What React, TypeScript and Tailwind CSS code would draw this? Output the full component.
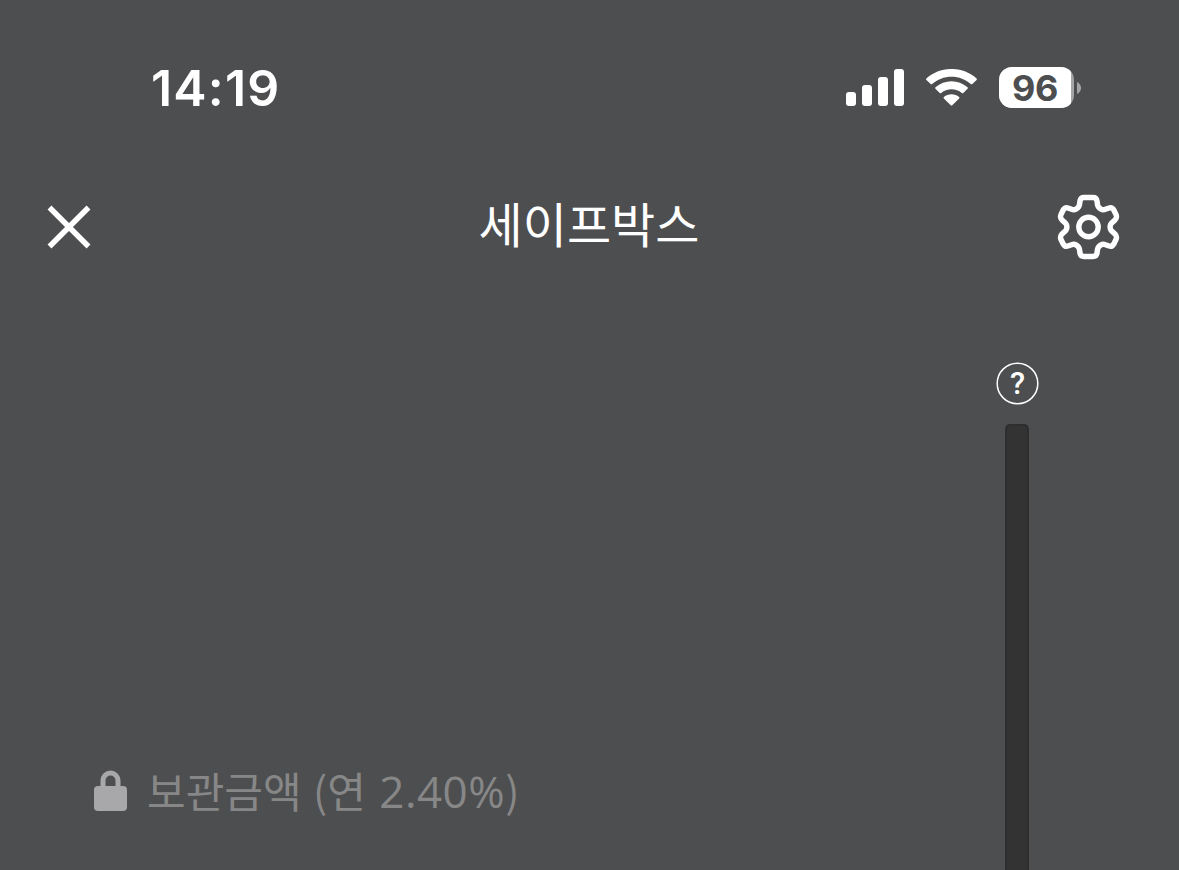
const koFont = "font-['Noto_Sans_CJK_KR','Noto_Sans',sans-serif]";

function SignalIcon() {
  return (
    <svg width="58" height="38" viewBox="0 0 58 38" fill="currentColor">
      <rect x="0" y="23" width="10" height="14" rx="3" />
      <rect x="16" y="16" width="10" height="21" rx="3" />
      <rect x="32" y="8" width="10" height="29" rx="3" />
      <rect x="48" y="0" width="10" height="37" rx="3" />
    </svg>
  );
}

function WifiIcon() {
  return (
    <svg width="51" height="38" viewBox="2 0.5 48 38" preserveAspectRatio="none" fill="currentColor">
      <path d="M26 8.200c6.900 0 13.300 2.700 18.200 7.300.4.4 1 .4 1.400 0l4-4.100c.4-.4.4-1 0-1.400C36.400-2.700 15.600-2.700 2.400 10c-.4.4-.4 1 0 1.400l4 4.100c.4.4 1 .4 1.400 0C12.700 10.900 19.100 8.200 26 8.200z" />
      <path d="M26 20.700c3.600 0 7 1.300 9.700 3.700.4.4 1 .4 1.400 0l4-4.100c.4-.4.4-1.100 0-1.500-8.500-8.100-21.700-8.100-30.200 0-.4.4-.4 1.100 0 1.500l4 4.100c.4.4 1 .4 1.400 0 2.700-2.400 6.100-3.700 9.700-3.700z" />
      <path d="M33.200 28.600c.4.4.4 1 0 1.400l-6.500 6.700c-.4.4-1 .4-1.400 0L18.800 30c-.4-.4-.4-1 0-1.400 4.100-3.700 10.300-3.700 14.400 0z" />
    </svg>
  );
}

function BatteryIcon({ level }: { level: number }) {
  return (
    <div className="flex items-center">
      <div className="h-[41px] w-[75px] overflow-hidden rounded-[13px] bg-[#a5a5a7]">
        <div className="flex h-full w-[72px] items-center justify-center bg-white font-['Inter',sans-serif] text-[36px] leading-none font-bold tracking-[-0.5px] text-[#4d4e50]">
          {level}
        </div>
      </div>
      <svg className="ml-[3px]" width="4" height="12" viewBox="0 0 4 12">
        <path d="M0 0c2.400 1 4 3.400 4 6s-1.600 5-4 6z" fill="#a5a5a7" />
      </svg>
    </div>
  );
}

function CloseIcon() {
  return (
    <svg width="44" height="44" viewBox="0 0 44 44" fill="none" stroke="currentColor" strokeWidth="5.5">
      <path d="M2.500 2.500l39 39M41.500 2.500l-39 39" />
    </svg>
  );
}

function GearIcon() {
  return (
    <svg width="64" height="66" viewBox="-31.5 -33 64 66" fill="none" stroke="currentColor" strokeWidth="5.4" strokeLinejoin="round">
      <path d="M-4.500-29.500H4.500Q8-29.500 8.500-26L9-22.500Q9.500-19.500 12.500-17.800Q14.500-16.700 17-17.700L20.500-19Q23.500-20 25.300-17L27.500-12.500Q28.800-9.300 26.700-7.300L23.800-4.600Q21.600-2.800 21.600 0Q21.600 2.800 23.800 4.600L26.700 7.300Q28.800 9.300 27.500 12.500L25.300 17Q23.500 20 20.500 19L17 17.700Q14.500 16.700 12.500 17.800Q9.500 19.500 9 22.500L8.500 26Q8 29.500 4.500 29.500H-4.500Q-8 29.500-8.500 26L-9 22.500Q-9.500 19.500-12.500 17.800Q-14.500 16.700-17 17.700L-20.500 19Q-23.500 20-25.300 17L-27.500 12.500Q-28.800 9.300-26.700 7.300L-23.800 4.600Q-21.600 2.800-21.600 0Q-21.600-2.800-23.800-4.600L-26.700-7.300Q-28.800-9.300-27.500-12.500L-25.300-17Q-23.500-20-20.500-19L-17-17.700Q-14.500-16.700-12.500-17.800Q-9.500-19.500-9-22.500L-8.500-26Q-8-29.500-4.500-29.500Z" />
      <circle r="9.7" />
    </svg>
  );
}

function HelpIcon() {
  return (
    <svg width="43" height="43" viewBox="0 0 43 43">
      <circle cx="21.5" cy="21.5" r="20.3" fill="none" stroke="currentColor" strokeWidth="1.5" />
      <text
        x="21.5"
        y="32"
        textAnchor="middle"
        fill="currentColor"
        className="font-['Roboto',sans-serif] text-[31px] font-medium"
      >
        ?
      </text>
    </svg>
  );
}

function LockIcon() {
  return (
    <svg className="mt-[2px]" width="33" height="41" viewBox="0 0 33 41">
      <rect y="16" width="33" height="25" rx="4" fill="#a8a8aa" />
      <path d="M9 17V10.500a7.500 7.500 0 0 1 15 0V17" fill="none" stroke="#a8a8aa" strokeWidth="5" />
    </svg>
  );
}

function StatusBar() {
  return (
    <div className="flex h-[175px] items-center justify-between pr-[98px] pl-[151px]">
      <time className="font-['Inter',sans-serif] text-[50px] leading-none font-semibold tracking-[1.2px]">14:19</time>
      <div className="flex items-center">
        <SignalIcon />
        <div className="mr-[22px] ml-[22px]">
          <WifiIcon />
        </div>
        <BatteryIcon level={96} />
      </div>
    </div>
  );
}

function Header() {
  return (
    <header className="grid h-[104px] grid-cols-[1fr_auto_1fr] items-center pr-[58px] pl-[47px]">
      <button aria-label="닫기" className="justify-self-start">
        <CloseIcon />
      </button>
      <h1 className={`${koFont} -mt-[10px] ml-[10px] text-[48px] leading-none`}>세이프박스</h1>
      <button aria-label="설정" className="justify-self-end">
        <GearIcon />
      </button>
    </header>
  );
}

export default function App() {
  return (
    <div className="flex h-[870px] w-[1179px] flex-col overflow-hidden bg-[#4d4e50] text-white">
      <StatusBar />
      <Header />
      <main className="flex flex-1 justify-between pr-[140px] pl-[94px]">
        <div className="flex items-center gap-[20px] self-end pb-[57px]">
          <LockIcon />
          <p className={`${koFont} mt-[4px] text-[42px] leading-none font-normal whitespace-nowrap text-[#878787]`}>
            보관금액<span className="ml-[2px]"> (연 </span>
            <span className="ml-[4px] font-['Open_Sans',sans-serif] text-[44px] tracking-[0.5px]">2.40%</span>)
          </p>
        </div>
        <div className="flex w-[43px] flex-col items-center pt-[83px]">
          <button aria-label="도움말" className="shrink-0">
            <HelpIcon />
          </button>
          <div className="mt-[19px] mr-px w-[24px] flex-1 rounded-t-[5px] border-x-2 border-t-2 border-[#2e2e2e] bg-[#333333]" />
        </div>
      </main>
    </div>
  );
}
